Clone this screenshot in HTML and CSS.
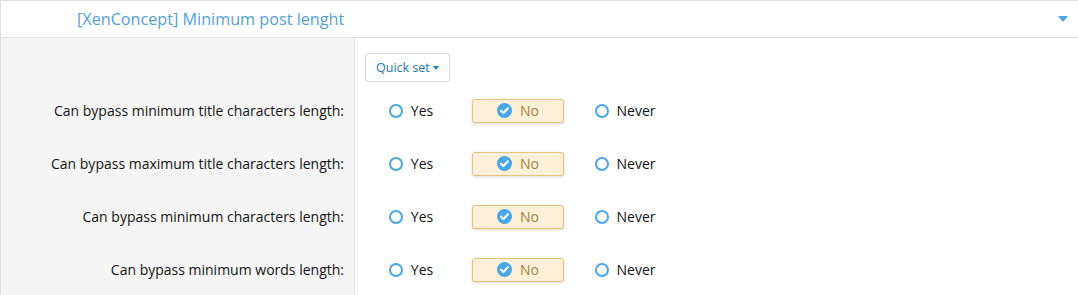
FILE: index.html
```html
<!DOCTYPE html>
<html>
<head>
<meta charset="utf-8">
<link rel="stylesheet" href="styles.css">
</head>
<body>
<div class="block">
  <div class="block-header">
    <span class="block-title">[XenConcept] Minimum post lenght</span>
    <span class="header-caret"></span>
  </div>
  <div class="form-body">
    <div class="row row-quick">
      <div class="label"></div>
      <div class="controls">
        <button class="quick-set">Quick set <span class="small-caret"></span></button>
      </div>
    </div>
    <div class="row">
      <div class="label">Can bypass minimum title characters length:</div>
      <div class="controls">
        <div class="opt"><span class="radio"></span><span>Yes</span></div>
        <div class="opt opt-selected"><span class="radio-checked"><svg viewBox="0 0 14 14" width="15" height="15"><circle cx="7" cy="7" r="7" fill="#47a7eb"/><path d="M3.8 7.2 L6 9.3 L10.2 5" fill="none" stroke="#fff" stroke-width="2" stroke-linecap="round" stroke-linejoin="round"/></svg></span><span>No</span></div>
        <div class="opt"><span class="radio"></span><span>Never</span></div>
      </div>
    </div>
    <div class="row">
      <div class="label">Can bypass maximum title characters length:</div>
      <div class="controls">
        <div class="opt"><span class="radio"></span><span>Yes</span></div>
        <div class="opt opt-selected"><span class="radio-checked"><svg viewBox="0 0 14 14" width="15" height="15"><circle cx="7" cy="7" r="7" fill="#47a7eb"/><path d="M3.8 7.2 L6 9.3 L10.2 5" fill="none" stroke="#fff" stroke-width="2" stroke-linecap="round" stroke-linejoin="round"/></svg></span><span>No</span></div>
        <div class="opt"><span class="radio"></span><span>Never</span></div>
      </div>
    </div>
    <div class="row">
      <div class="label">Can bypass minimum characters length:</div>
      <div class="controls">
        <div class="opt"><span class="radio"></span><span>Yes</span></div>
        <div class="opt opt-selected"><span class="radio-checked"><svg viewBox="0 0 14 14" width="15" height="15"><circle cx="7" cy="7" r="7" fill="#47a7eb"/><path d="M3.8 7.2 L6 9.3 L10.2 5" fill="none" stroke="#fff" stroke-width="2" stroke-linecap="round" stroke-linejoin="round"/></svg></span><span>No</span></div>
        <div class="opt"><span class="radio"></span><span>Never</span></div>
      </div>
    </div>
    <div class="row">
      <div class="label">Can bypass minimum words length:</div>
      <div class="controls">
        <div class="opt"><span class="radio"></span><span>Yes</span></div>
        <div class="opt opt-selected"><span class="radio-checked"><svg viewBox="0 0 14 14" width="15" height="15"><circle cx="7" cy="7" r="7" fill="#47a7eb"/><path d="M3.8 7.2 L6 9.3 L10.2 5" fill="none" stroke="#fff" stroke-width="2" stroke-linecap="round" stroke-linejoin="round"/></svg></span><span>No</span></div>
        <div class="opt"><span class="radio"></span><span>Never</span></div>
      </div>
    </div>
  </div>
</div>
</body>
</html>
```
FILE: styles.css
```css
html, body {
  margin: 0;
  padding: 0;
  background: #fff;
}
body {
  font-family: "Open Sans", "Noto Sans", sans-serif;
  color: #141414;
}
.block {
  border-top: 1px solid #dfdfdf;
  border-left: 1px solid #dfdfdf;
}
.block-header {
  height: 36px;
  display: flex;
  align-items: center;
  justify-content: space-between;
  padding: 0 10px 0 76px;
  border-bottom: 1px solid #dfdfdf;
}
.block-title {
  font-size: 16.2px;
  color: #529fda;
}
.header-caret {
  width: 0;
  height: 0;
  border-left: 5px solid transparent;
  border-right: 5px solid transparent;
  border-top: 6px solid #47a7eb;
}
.form-body {
  display: flex;
  flex-direction: column;
}
.row {
  display: grid;
  grid-template-columns: 354px 1fr;
  height: 53px;
}
.row-quick {
  height: auto;
}
.label {
  background: #f5f5f5;
  border-right: 1px solid #dfdfdf;
  display: flex;
  align-items: center;
  justify-content: flex-end;
  padding-right: 10px;
  font-size: 14px;
}
.controls {
  display: flex;
  align-items: center;
  gap: 15px;
  padding-left: 10px;
}
.row-quick .controls {
  padding-top: 15px;
  padding-bottom: 2px;
}
.quick-set {
  height: 29px;
  padding: 0 10px;
  border: 1px solid #d8d8d8;
  border-radius: 3px;
  background: #fff;
  color: #2577b1;
  font-family: inherit;
  font-size: 12.5px;
  display: flex;
  align-items: center;
  gap: 3px;
}
.small-caret {
  width: 0;
  height: 0;
  border-left: 3.5px solid transparent;
  border-right: 3.5px solid transparent;
  border-top: 4px solid #2577b1;
}
.opt {
  width: 92px;
  height: 24px;
  box-sizing: border-box;
  display: flex;
  align-items: center;
  justify-content: center;
  gap: 8px;
  font-size: 14px;
  border-radius: 3px;
}
.radio {
  width: 14px;
  height: 14px;
  box-sizing: border-box;
  border: 2.5px solid #47a7eb;
  border-radius: 50%;
}
.radio-checked {
  display: flex;
  width: 15px;
  height: 15px;
}
.opt-selected {
  background: #fdf0d6;
  border: 1px solid #e6c27e;
  color: #a3843f;
  box-shadow: 0 1px 3px rgba(0,0,0,0.15);
}
```
